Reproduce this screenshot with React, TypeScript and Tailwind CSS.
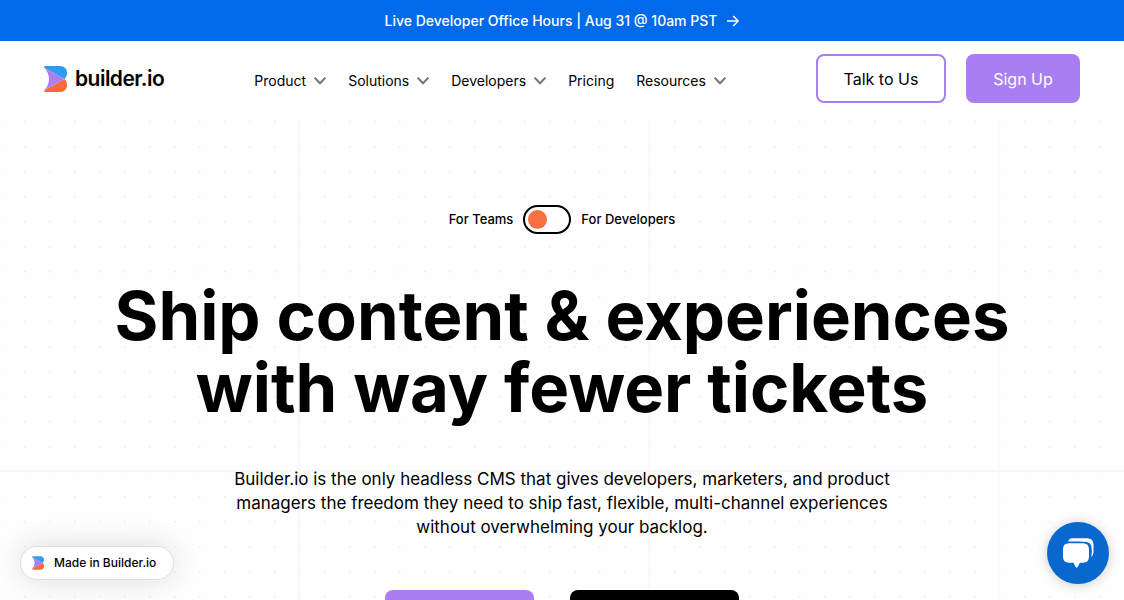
import React from "react";

function LogoMark({ className }: { className: string }) {
  return (
    <svg className={className} viewBox="0 0 23 26" aria-hidden="true">
      <path d="M1.500 0H16c4.500 0 7 3.200 7 7 0 2.600-1 4.600-2.600 6L0.300 1.800C-0.300 1 .4 0 1.500 0Z" fill="#2f9bf0" />
      <path d="M1.500 26H16c4.500 0 7-3.200 7-7 0-2.600-1-4.600-2.600-6L0.300 24.200C-0.300 25 .4 26 1.500 26Z" fill="#f8693b" />
      <path d="M.3 1.800 20.400 13 .3 24.200C3.200 21 5 17.200 5 13S3.200 5 .3 1.800Z" fill="#a97ff2" />
    </svg>
  );
}

function Chevron() {
  return (
    <svg className="h-2 w-3" viewBox="0 0 12 8" fill="none" stroke="#777" strokeWidth="2" aria-hidden="true">
      <path d="M.6 .6 6 6.200 11.400.6" />
    </svg>
  );
}

function NavMenu({ label }: { label: string }) {
  return (
    <button type="button" className="flex items-center gap-2">
      {label}
      <Chevron />
    </button>
  );
}

export default function App() {
  return (
    <div className="relative flex h-screen flex-col overflow-hidden bg-[#fefefe] font-['Inter',sans-serif] text-black">
      <a href="#office-hours" className="flex h-[41px] shrink-0 items-center justify-center gap-2.5 bg-[#006aeb] text-sm font-medium text-white">
        Live Developer Office Hours | Aug 31 @ 10am PST
        <svg className="h-3 w-3" viewBox="0 0 12 12" fill="none" stroke="currentColor" strokeWidth="1.500" aria-hidden="true">
          <path d="M0 6h11M6.200 1l5 5-5 5" />
        </svg>
      </a>

      <header className="flex h-20 shrink-0 items-center justify-between px-11 pb-[5px]">
        <a href="#home" className="flex items-center gap-2 text-[21px] font-semibold tracking-tight">
          <LogoMark className="h-[26px] w-[23px]" />
          builder.io
        </a>
        <nav className="flex items-center gap-[22px] pt-1 text-sm" aria-label="Main">
          <NavMenu label="Product" />
          <NavMenu label="Solutions" />
          <NavMenu label="Developers" />
          <a href="#pricing">Pricing</a>
          <NavMenu label="Resources" />
        </nav>
        <div className="flex gap-5">
          <a href="#talk" className="flex h-[49px] w-[130px] items-center justify-center rounded-lg border-2 border-[#aa7ef2] bg-white">
            Talk to Us
          </a>
          <a href="#signup" className="flex h-[49px] w-[114px] items-center justify-center rounded-lg bg-[#aa7ef2] text-white">
            Sign Up
          </a>
        </div>
      </header>

      <main className="flex grow flex-col items-center bg-[linear-gradient(90deg,#f9f9f9_2px,transparent_2px),linear-gradient(#f7f7f7_2px,transparent_2px),radial-gradient(circle,#efefef_1px,transparent_1px)] bg-[size:350px_350px,350px_500px,25px_25px] bg-[position:298px_0,0_349px,12px_-12px] pt-[84px] text-center">
        <div className="flex items-center gap-2.5 text-[13px] font-medium">
          <span>For Teams</span>
          <button type="button" role="switch" aria-checked="false" aria-label="Show content for developers" className="flex h-[29px] w-12 items-center rounded-full border-2 border-black bg-white px-[3px]">
            <span className="size-[19px] rounded-full bg-[#f8703f]" />
          </button>
          <span>For Developers</span>
        </div>
        <h1 className="mt-[46px] text-[67px] leading-[72px] font-bold whitespace-nowrap">
          Ship content &amp; experiences
          <br />
          with way fewer tickets
        </h1>
        <p className="mt-[43px] text-[17px] leading-6 whitespace-nowrap">
          Builder.io is the only headless CMS that gives developers, marketers, and product
          <br />
          managers the freedom they need to ship fast, flexible, multi-channel experiences
          <br />
          without overwhelming your backlog.
        </p>
        <div className="mt-[51px] flex gap-9">
          <a href="#start" aria-label="Get started" className="h-12 w-[149px] rounded-lg bg-[#aa7ef2]" />
          <a href="#demo" aria-label="Get a demo" className="h-12 w-[169px] rounded-lg bg-black" />
        </div>
      </main>

      <a href="#made-in-builder" className="absolute bottom-5 left-5 flex h-[34px] w-[154px] items-center gap-2.5 rounded-full border border-[#dedede] bg-white px-[11px] text-xs font-medium whitespace-nowrap shadow-[0_0_30px_rgba(0,0,0,0.14)]">
        <LogoMark className="h-3.5 w-3" />
        Made in Builder.io
      </a>
      <button type="button" aria-label="Open chat" className="absolute right-[15px] bottom-4 flex size-[62px] items-center justify-center rounded-full bg-[#0868ce] shadow-[0_1px_12px_rgba(0,0,0,0.2)]">
        <svg className="h-[30px] w-8" viewBox="0 0 32 30" fill="#fff" aria-hidden="true">
          <path d="M6 3.500C7 .8 9 .3 12 .3h12c5 0 7.500 2 7.500 6.500v6c0 3.200-.6 5-2.300 6.500.5-2.300.6-5 .6-7 0-6-1.800-8.300-7-8.600C18 3.400 11 3.300 6 3.500Z" />
          <path d="M8 5.200h12c5 0 7 2 7 6.500v6.500c0 4.500-2 6.500-7 6.500h-1.500c-1 0-1.600 2-2.800 4.300-.6 1-1.500 1-2.100 0C12.400 26.700 12 24.700 11 24.700H8c-5 0-7-2-7-6.500v-6.500c0-4.500 2-6.500 7-6.500Z" />
        </svg>
      </button>
    </div>
  );
}
